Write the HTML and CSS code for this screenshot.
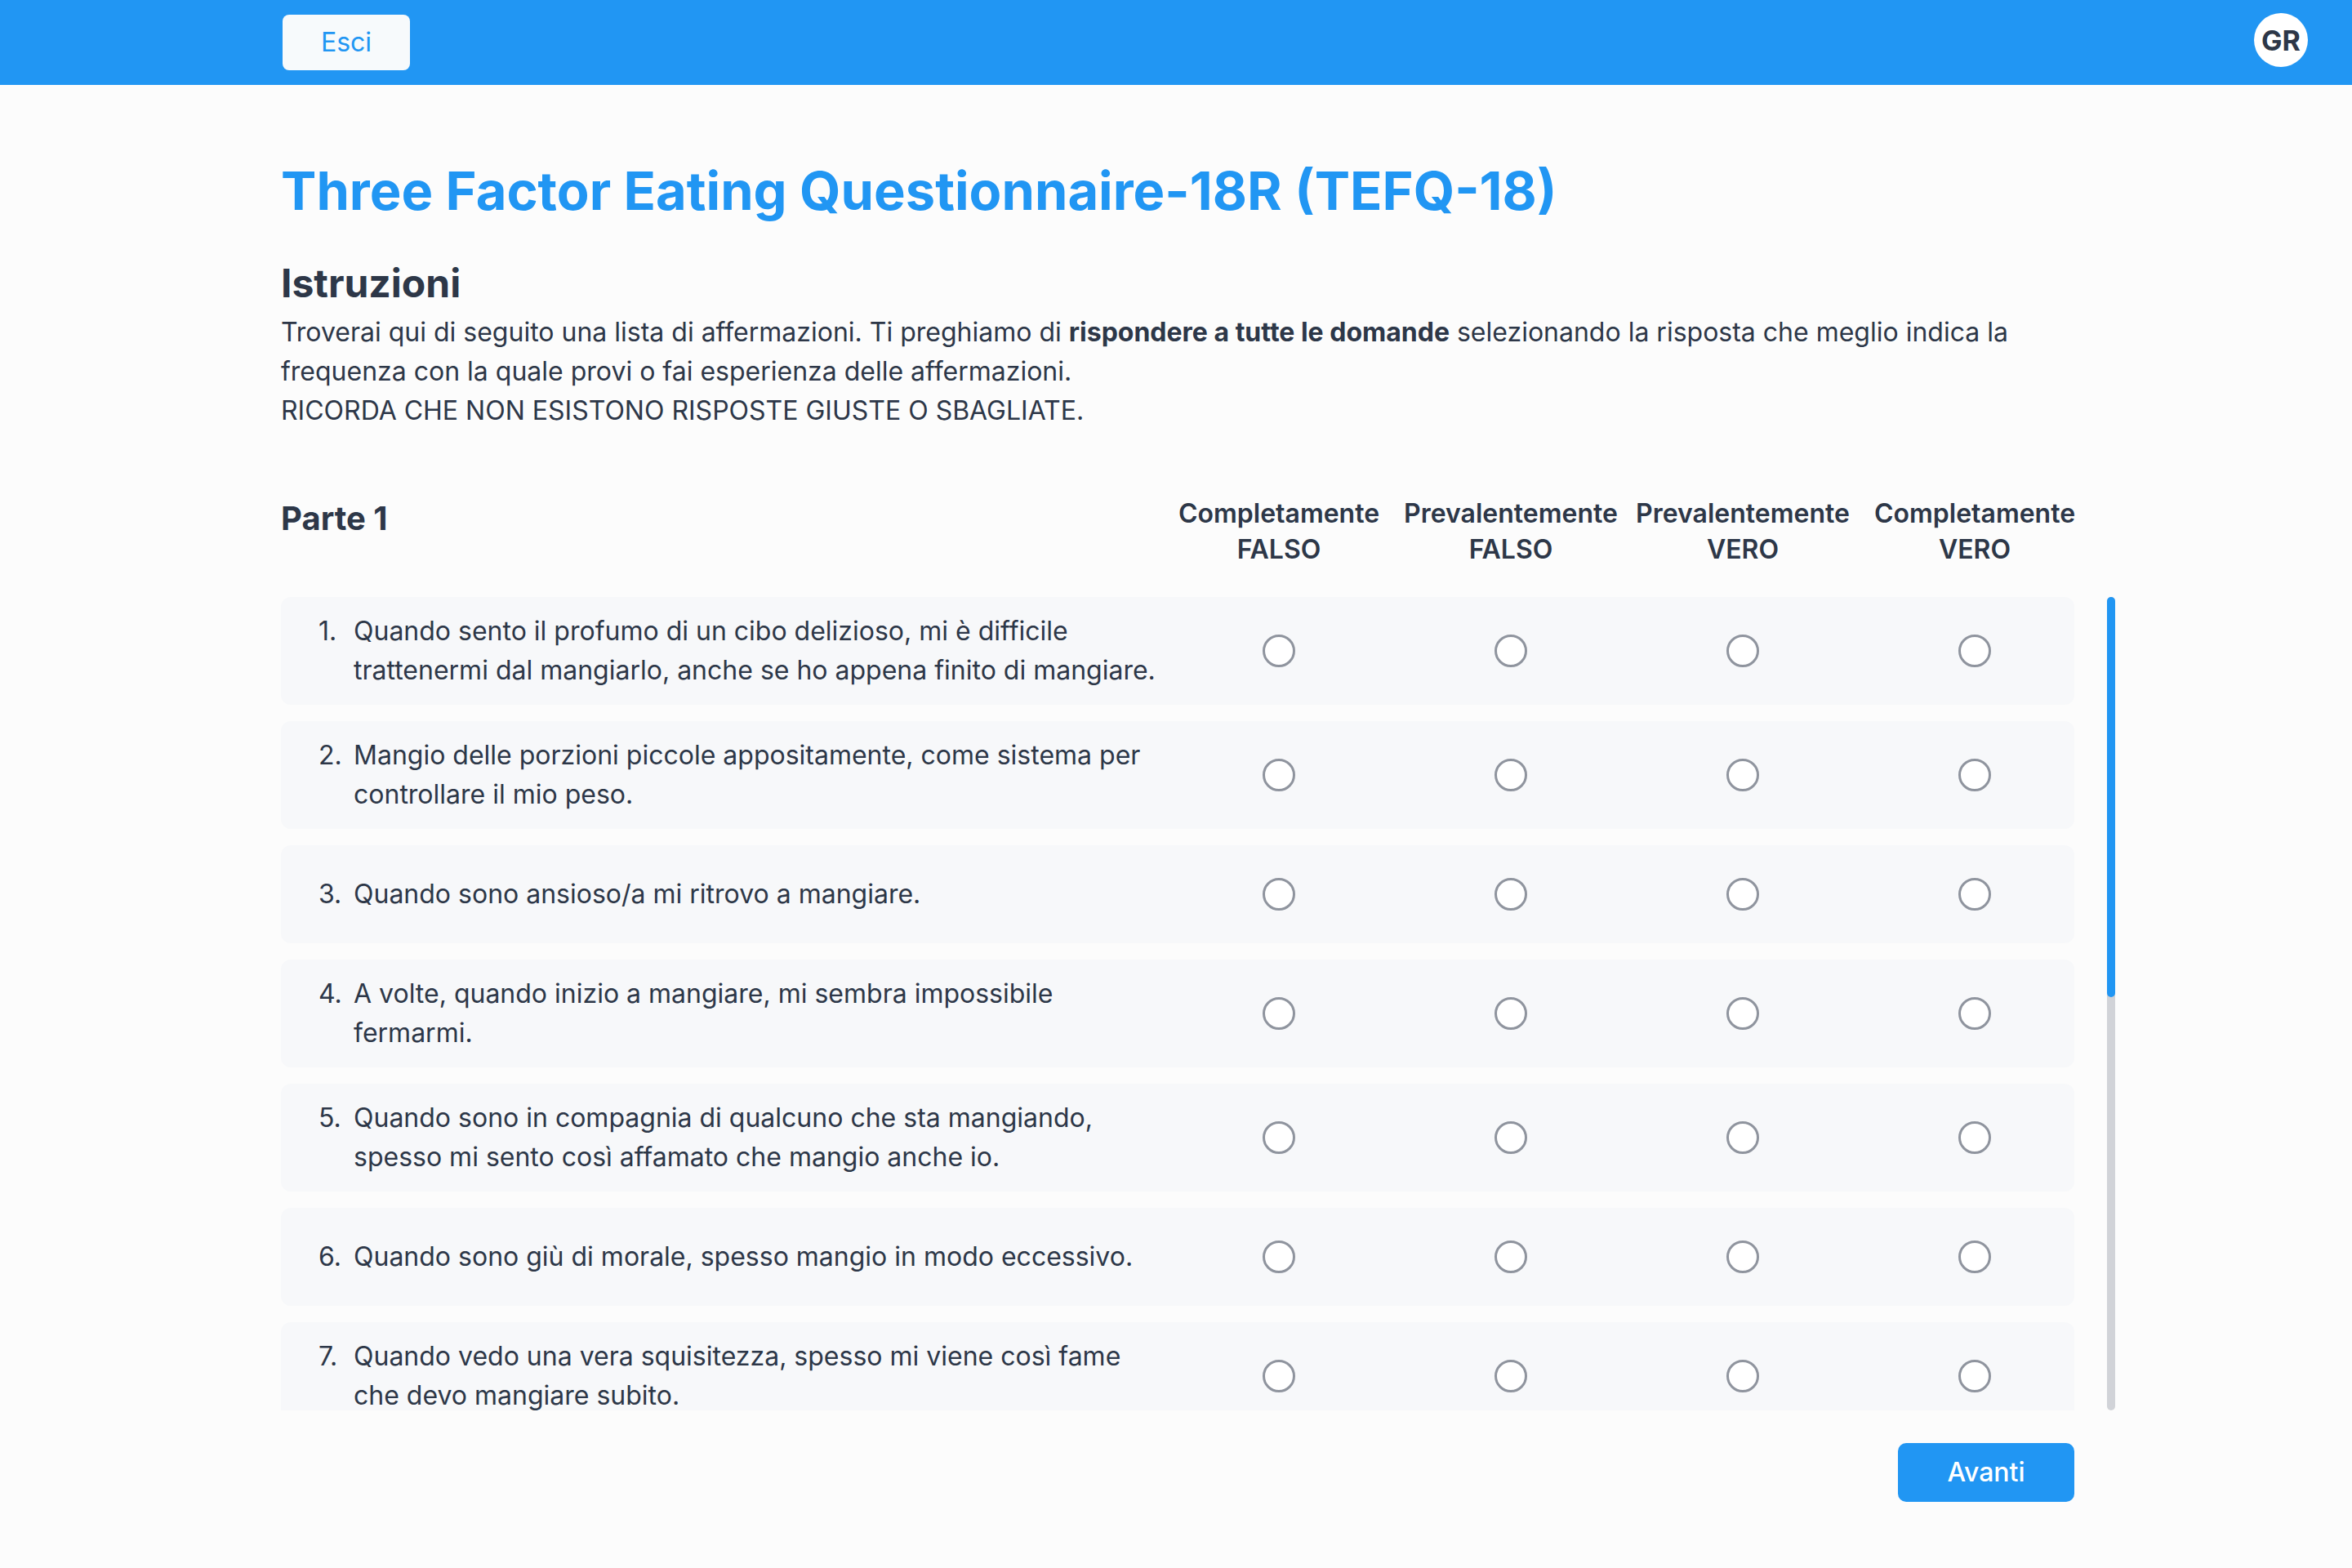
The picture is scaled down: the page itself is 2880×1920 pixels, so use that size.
FILE: index.html
```html
<!DOCTYPE html>
<html lang="it">
<head>
<meta charset="utf-8">
<title>TEFQ-18</title>
<link rel="stylesheet" href="styles.css">
</head>
<body>
<header class="topbar">
  <div class="topbar-inner">
    <button class="btn-exit" type="button">Esci</button>
  </div>
  <div class="avatar">GR</div>
</header>

<main class="container">
  <h1 class="title">Three Factor Eating Questionnaire-18R (TEFQ-18)</h1>

  <section class="instructions">
    <h2>Istruzioni</h2>
    <p>Troverai qui di seguito una lista di affermazioni. Ti preghiamo di <strong>rispondere a tutte le domande</strong> selezionando la risposta che meglio indica la frequenza con la quale provi o fai esperienza delle affermazioni.<br>RICORDA CHE NON ESISTONO RISPOSTE GIUSTE O SBAGLIATE.</p>
  </section>

  <section class="part">
    <div class="part-head">
      <h3 class="part-title">Parte 1</h3>
      <div class="col-label"><span>Completamente</span><span>FALSO</span></div>
      <div class="col-label"><span>Prevalentemente</span><span>FALSO</span></div>
      <div class="col-label"><span>Prevalentemente</span><span>VERO</span></div>
      <div class="col-label"><span>Completamente</span><span>VERO</span></div>
    </div>

    <div class="scroll-area">
      <div class="questions">
        <div class="q-row">
          <div class="q-text"><span class="q-num">1.</span><span>Quando sento il profumo di un cibo delizioso, mi è difficile trattenermi dal mangiarlo, anche se ho appena finito di mangiare.</span></div>
          <div class="q-opt"><input class="radio" type="radio" name="q1"></div>
          <div class="q-opt"><input class="radio" type="radio" name="q1"></div>
          <div class="q-opt"><input class="radio" type="radio" name="q1"></div>
          <div class="q-opt"><input class="radio" type="radio" name="q1"></div>
        </div>
        <div class="q-row">
          <div class="q-text"><span class="q-num">2.</span><span>Mangio delle porzioni piccole appositamente, come sistema per controllare il mio peso.</span></div>
          <div class="q-opt"><input class="radio" type="radio" name="q2"></div>
          <div class="q-opt"><input class="radio" type="radio" name="q2"></div>
          <div class="q-opt"><input class="radio" type="radio" name="q2"></div>
          <div class="q-opt"><input class="radio" type="radio" name="q2"></div>
        </div>
        <div class="q-row">
          <div class="q-text"><span class="q-num">3.</span><span>Quando sono ansioso/a mi ritrovo a mangiare.</span></div>
          <div class="q-opt"><input class="radio" type="radio" name="q3"></div>
          <div class="q-opt"><input class="radio" type="radio" name="q3"></div>
          <div class="q-opt"><input class="radio" type="radio" name="q3"></div>
          <div class="q-opt"><input class="radio" type="radio" name="q3"></div>
        </div>
        <div class="q-row">
          <div class="q-text"><span class="q-num">4.</span><span>A volte, quando inizio a mangiare, mi sembra impossibile fermarmi.</span></div>
          <div class="q-opt"><input class="radio" type="radio" name="q4"></div>
          <div class="q-opt"><input class="radio" type="radio" name="q4"></div>
          <div class="q-opt"><input class="radio" type="radio" name="q4"></div>
          <div class="q-opt"><input class="radio" type="radio" name="q4"></div>
        </div>
        <div class="q-row">
          <div class="q-text"><span class="q-num">5.</span><span>Quando sono in compagnia di qualcuno che sta mangiando, spesso mi sento così affamato che mangio anche io.</span></div>
          <div class="q-opt"><input class="radio" type="radio" name="q5"></div>
          <div class="q-opt"><input class="radio" type="radio" name="q5"></div>
          <div class="q-opt"><input class="radio" type="radio" name="q5"></div>
          <div class="q-opt"><input class="radio" type="radio" name="q5"></div>
        </div>
        <div class="q-row">
          <div class="q-text"><span class="q-num">6.</span><span>Quando sono giù di morale, spesso mangio in modo eccessivo.</span></div>
          <div class="q-opt"><input class="radio" type="radio" name="q6"></div>
          <div class="q-opt"><input class="radio" type="radio" name="q6"></div>
          <div class="q-opt"><input class="radio" type="radio" name="q6"></div>
          <div class="q-opt"><input class="radio" type="radio" name="q6"></div>
        </div>
        <div class="q-row">
          <div class="q-text"><span class="q-num">7.</span><span>Quando vedo una vera squisitezza, spesso mi viene così fame che devo mangiare subito.</span></div>
          <div class="q-opt"><input class="radio" type="radio" name="q7"></div>
          <div class="q-opt"><input class="radio" type="radio" name="q7"></div>
          <div class="q-opt"><input class="radio" type="radio" name="q7"></div>
          <div class="q-opt"><input class="radio" type="radio" name="q7"></div>
        </div>
        <div class="q-row">
          <div class="q-text"><span class="q-num">8.</span><span>Mi viene così tanta fame che spesso il mio stomaco sembra un pozzo senza fondo.</span></div>
          <div class="q-opt"><input class="radio" type="radio" name="q8"></div>
          <div class="q-opt"><input class="radio" type="radio" name="q8"></div>
          <div class="q-opt"><input class="radio" type="radio" name="q8"></div>
          <div class="q-opt"><input class="radio" type="radio" name="q8"></div>
        </div>
        <div class="q-row">
          <div class="q-text"><span class="q-num">9.</span><span>Ho sempre così fame che mi è difficile smettere di mangiare prima di aver finito il cibo nel piatto.</span></div>
          <div class="q-opt"><input class="radio" type="radio" name="q9"></div>
          <div class="q-opt"><input class="radio" type="radio" name="q9"></div>
          <div class="q-opt"><input class="radio" type="radio" name="q9"></div>
          <div class="q-opt"><input class="radio" type="radio" name="q9"></div>
        </div>
        <div class="q-row">
          <div class="q-text"><span class="q-num">10.</span><span>Quando mi sento solo/a, mi consolo mangiando.</span></div>
          <div class="q-opt"><input class="radio" type="radio" name="q10"></div>
          <div class="q-opt"><input class="radio" type="radio" name="q10"></div>
          <div class="q-opt"><input class="radio" type="radio" name="q10"></div>
          <div class="q-opt"><input class="radio" type="radio" name="q10"></div>
        </div>
        <div class="q-row">
          <div class="q-text"><span class="q-num">11.</span><span>Durante i pasti mi trattengo consapevolmente per non aumentare di peso.</span></div>
          <div class="q-opt"><input class="radio" type="radio" name="q11"></div>
          <div class="q-opt"><input class="radio" type="radio" name="q11"></div>
          <div class="q-opt"><input class="radio" type="radio" name="q11"></div>
          <div class="q-opt"><input class="radio" type="radio" name="q11"></div>
        </div>
        <div class="q-row">
          <div class="q-text"><span class="q-num">12.</span><span>Non mangio alcuni cibi perché mi fanno ingrassare.</span></div>
          <div class="q-opt"><input class="radio" type="radio" name="q12"></div>
          <div class="q-opt"><input class="radio" type="radio" name="q12"></div>
          <div class="q-opt"><input class="radio" type="radio" name="q12"></div>
          <div class="q-opt"><input class="radio" type="radio" name="q12"></div>
        </div>
        <div class="q-row">
          <div class="q-text"><span class="q-num">13.</span><span>Ho sempre abbastanza fame da poter mangiare in qualsiasi momento.</span></div>
          <div class="q-opt"><input class="radio" type="radio" name="q13"></div>
          <div class="q-opt"><input class="radio" type="radio" name="q13"></div>
          <div class="q-opt"><input class="radio" type="radio" name="q13"></div>
          <div class="q-opt"><input class="radio" type="radio" name="q13"></div>
        </div>
      </div>
      <div class="scrollbar" aria-hidden="true">
        <div class="scrollbar-thumb"></div>
      </div>
    </div>
  </section>

  <div class="actions">
    <button class="btn-next" type="button">Avanti</button>
  </div>
</main>
</body>
</html>
```
FILE: styles.css
```css
* {
  box-sizing: border-box;
}

body {
  margin: 0;
  background: #fcfcfc;
  font-family: Inter, "Noto Sans", sans-serif;
  color: #2d3748;
}

/* ---------- top bar ---------- */
.topbar {
  height: 104px;
  background: #2196f3;
  display: grid;
  grid-template-columns: 344px 2196px 1fr;
  align-items: center;
}

.topbar-inner {
  grid-column: 2;
  display: flex;
}

.btn-exit {
  margin-left: 2px;
  width: 156px;
  padding: 10px 0;
  border: none;
  border-radius: 8px;
  background: #f7fafc;
  color: #2196f3;
  font-family: Inter, "Noto Sans", sans-serif;
  font-size: 32px;
  line-height: 48px;
  font-weight: 400;
}

.avatar {
  grid-column: 3;
  justify-self: end;
  align-self: start;
  margin-top: 16px;
  margin-right: 54px;
  width: 66px;
  height: 66px;
  border-radius: 50%;
  background: #ffffff;
  color: #2d3748;
  display: flex;
  align-items: center;
  justify-content: center;
  font-size: 34px;
  font-weight: 700;
}

/* ---------- main ---------- */
.container {
  width: 2196px;
  margin-left: 344px;
  padding-top: 89px;
}

.title {
  margin: 0;
  font-size: 65px;
  line-height: 82px;
  font-weight: 700;
  color: #2196f3;
}

.instructions {
  margin-top: 40px;
}

.instructions h2 {
  margin: 0 0 4px;
  font-size: 48px;
  line-height: 64px;
  font-weight: 700;
}

.instructions p {
  margin: 0;
  font-size: 32px;
  line-height: 48px;
}

.instructions strong {
  font-weight: 700;
}

/* ---------- part ---------- */
.part {
  margin-top: 80px;
}

.part-head {
  display: grid;
  grid-template-columns: minmax(0, 1fr) repeat(4, 248px);
  column-gap: 36px;
  align-items: start;
  margin-right: -2px;
  margin-bottom: 36px;
}

.part-title {
  margin: 0;
  font-size: 40px;
  line-height: 56px;
  font-weight: 700;
}

.col-label {
  display: flex;
  flex-direction: column;
  align-items: center;
  font-size: 32px;
  line-height: 44px;
  font-weight: 600;
  white-space: nowrap;
}

.scroll-area {
  display: flex;
  gap: 40px;
  margin-right: -50px;
  height: 996px;
}

.questions {
  flex: 1;
  min-width: 0;
  overflow: hidden;
  display: flex;
  flex-direction: column;
  gap: 20px;
}

.scrollbar {
  flex: none;
  width: 10px;
  background: #d1d3d8;
  border-radius: 5px;
}

.scrollbar-thumb {
  height: 490px;
  background: #2196f3;
  border-radius: 5px;
}

.q-row {
  flex: none;
  display: grid;
  grid-template-columns: minmax(0, 1fr) repeat(4, 248px);
  column-gap: 36px;
  align-items: center;
  min-height: 120px;
  padding: 18px 0 18px 46px;
  background: #f7f8fa;
  border-radius: 12px;
}

.q-text {
  display: flex;
  margin-right: -16px;
  font-size: 32px;
  line-height: 48px;
}

.q-num {
  flex: none;
  width: 43px;
}

.q-opt {
  display: flex;
  justify-content: center;
  padding-left: 4px;
}

.radio {
  appearance: none;
  -webkit-appearance: none;
  margin: 0;
  width: 40px;
  height: 40px;
  border: 3px solid #8f949e;
  border-radius: 50%;
  background: #ffffff;
}

/* ---------- actions ---------- */
.actions {
  display: flex;
  justify-content: flex-end;
  margin-top: 40px;
}

.btn-next {
  width: 216px;
  padding: 12px 0;
  border: none;
  border-radius: 10px;
  background: #2196f3;
  color: #ffffff;
  font-family: Inter, "Noto Sans", sans-serif;
  font-size: 32px;
  line-height: 48px;
  font-weight: 500;
}
```
